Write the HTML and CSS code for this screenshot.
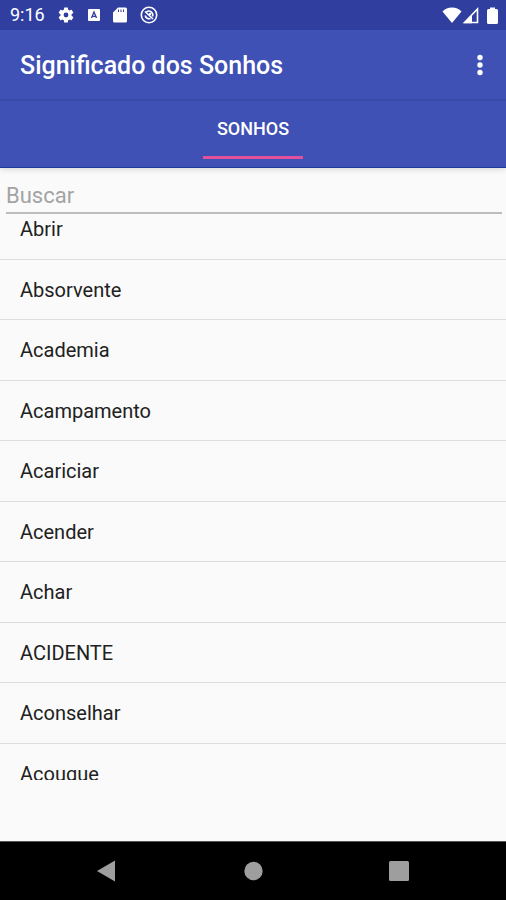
FILE: index.html
```html
<!DOCTYPE html>
<html lang="pt-BR">
<head>
<meta charset="utf-8">
<meta name="viewport" content="width=device-width, initial-scale=1">
<title>Significado dos Sonhos</title>
<link rel="stylesheet" href="styles.css">
</head>
<body>
<div class="screen">
  <header class="header">
    <div class="status">
      <time class="clock">9:16</time>
      <div class="notices">
        <svg width="18" height="18" viewBox="0 0 24 24" fill="currentColor" aria-hidden="true"><path fill-rule="evenodd" d="M19.4 13a7.500 7.500 0 0 0 0-2l2.200-1.700a.5.5 0 0 0 .1-.6l-2-3.500a.5.5 0 0 0-.6-.2l-2.500 1a7.700 7.700 0 0 0-1.700-1l-.4-2.600a.5.5 0 0 0-.5-.4h-4a.5.5 0 0 0-.5.4L9.100 5a7.700 7.700 0 0 0-1.700 1l-2.500-1a.5.5 0 0 0-.6.200l-2 3.500a.5.5 0 0 0 .1.600L4.600 11a7.500 7.500 0 0 0 0 2l-2.200 1.700a.5.5 0 0 0-.1.600l2 3.500c.1.200.4.300.6.200l2.500-1a7.700 7.700 0 0 0 1.700 1l.4 2.600c0 .200.200.4.5.4h4c.2 0 .5-.2.5-.4l.4-2.600a7.700 7.700 0 0 0 1.700-1l2.500 1c.2.100.5 0 .6-.2l2-3.500a.5.5 0 0 0-.1-.6zM12 15.200a3.200 3.200 0 1 1 0-6.400 3.200 3.200 0 0 1 0 6.400z"/></svg>
        <svg width="12" height="14" viewBox="0 0 12 14" aria-hidden="true"><rect y="1" width="12" height="12" rx="1" fill="currentColor"/><path d="M3.500 10 6 4l2.500 6M4.500 8.300h3" fill="none" stroke="#303f9f" stroke-width="1.300"/></svg>
        <svg width="14" height="16" viewBox="0 0 14 16" aria-hidden="true"><path d="M5 .5h7.500A1.500 1.500 0 0 1 14 2v12a1.500 1.500 0 0 1-1.500 1.500h-11A1.500 1.500 0 0 1 0 14V5.500z" fill="currentColor"/><path d="M5.500 2.500v2.500M8 2.500v2.500M10.500 2.500v2.500" stroke="#303f9f" stroke-width="1"/></svg>
        <svg width="18" height="18" viewBox="0 0 18 18" fill="none" stroke="currentColor" aria-hidden="true"><circle cx="9" cy="9" r="7.700" stroke-width="1.600"/><path d="M5 5.500 13 13M5.200 9.500A4 4 0 0 0 10.500 12.500M6.500 5.800A4 4 0 0 1 12.500 10.500" stroke-width="1.600"/><circle cx="10" cy="8" r="1.200" fill="currentColor" stroke="none"/></svg>
      </div>
      <div class="signals">
        <svg width="20" height="16" viewBox="0 0 20 16" fill="currentColor" aria-hidden="true"><path d="M10 16 .5 4.500C3 2 6 .5 10 .5s7 1.500 9.500 4z"/></svg>
        <svg width="17" height="17" viewBox="0 0 17 17" aria-hidden="true"><path d="M2.500 15.500 15.500 2v13.500z" fill="none" stroke="currentColor" stroke-width="1.600"/><path d="M1.500 16.300 10 7.500v8.800z" fill="currentColor"/></svg>
        <svg width="11" height="17" viewBox="0 0 11 17" fill="currentColor" aria-hidden="true"><path d="M3 2V.5h5V2h1.500A1.500 1.500 0 0 1 11 3.500v12A1.500 1.500 0 0 1 9.500 17h-8A1.500 1.500 0 0 1 0 15.500v-12A1.500 1.500 0 0 1 1.500 2z"/></svg>
      </div>
    </div>
    <div class="appbar">
      <h1 class="title">Significado dos Sonhos</h1>
      <button class="more" type="button" aria-label="Mais opções">
        <svg width="6" height="22" viewBox="0 0 6 22" fill="currentColor" aria-hidden="true"><circle cx="3" cy="3.500" r="2.700"/><circle cx="3" cy="11" r="2.700"/><circle cx="3" cy="18.500" r="2.700"/></svg>
      </button>
    </div>
    <nav class="tabs"><a class="tab" href="#sonhos" aria-current="page">SONHOS</a></nav>
  </header>
  <main class="content" id="sonhos">
    <input class="search" type="text" placeholder="Buscar" aria-label="Buscar">
    <div class="viewport">
      <ul class="list">
        <li class="row">Abrir</li>
        <li class="row">Absorvente</li>
        <li class="row">Academia</li>
        <li class="row">Acampamento</li>
        <li class="row">Acariciar</li>
        <li class="row">Acender</li>
        <li class="row">Achar</li>
        <li class="row">ACIDENTE</li>
        <li class="row">Aconselhar</li>
        <li class="row">Acougue</li>
      </ul>
    </div>
  </main>
  <footer class="navbar">
    <button class="key" type="button" aria-label="Voltar"><svg width="20" height="22" viewBox="0 0 20 22" fill="currentColor" aria-hidden="true"><path d="M0 11 18 .5v21z"/></svg></button>
    <button class="key" type="button" aria-label="Início"><svg width="20" height="20" viewBox="0 0 20 20" fill="currentColor" aria-hidden="true"><circle cx="10.500" cy="10" r="9.200"/></svg></button>
    <button class="key" type="button" aria-label="Recentes"><svg width="20" height="20" viewBox="0 0 20 20" fill="currentColor" aria-hidden="true"><rect width="20" height="20" rx="1.500"/></svg></button>
  </footer>
</div>
</body>
</html>
```
FILE: styles.css
```css
* {
  box-sizing: border-box;
}

body {
  margin: 0;
  background: #fafafa;
  color: #212121;
  font-family: Roboto, "Liberation Sans", sans-serif;
}

button {
  display: grid;
  place-items: center;
  padding: 0;
  border: 0;
  background: none;
  color: inherit;
}

svg {
  display: block;
}

.screen {
  display: flex;
  flex-direction: column;
  height: 100vh;
}

.header {
  background: #3f51b5;
  color: #fff;
  border-bottom: 1px solid #1c3a9c;
  box-shadow: 0 1px 6px rgba(0, 0, 0, 0.16);
}

.status {
  display: flex;
  align-items: center;
  height: 30px;
  padding: 0 8px 0 10px;
  background: #303f9f;
}

.clock {
  font-size: 18px;
  line-height: 32px;
}

.notices {
  display: flex;
  align-items: center;
  gap: 13px;
  margin-left: 12px;
}

.signals {
  display: flex;
  align-items: center;
  margin-left: auto;
}

.signals svg:last-child {
  margin-left: 8px;
}

.appbar {
  display: flex;
  align-items: center;
  justify-content: space-between;
  height: 71px;
  padding: 0 16px 0 20px;
  border-bottom: 2px solid #3b4ba9;
}

.title {
  margin: 0;
  font-size: 25px;
  font-weight: 500;
  line-height: 32px;
  padding-top: 2px;
}

.more {
  width: 20px;
  height: 40px;
}

.tabs {
  display: flex;
  justify-content: center;
  height: 66px;
  padding-bottom: 8px;
}

.tab {
  width: 100px;
  border-bottom: 3px solid #e0529c;
  color: #fff;
  font-size: 18px;
  font-weight: 500;
  line-height: 56px;
  text-align: center;
  text-decoration: none;
}

.content {
  display: flex;
  flex: 1;
  flex-direction: column;
  min-height: 0;
  padding: 12px 0 61px;
}

.search {
  height: 34px;
  margin: 0 4px 0 6px;
  padding: 0 0 2px;
  border: 0;
  border-bottom: 2px solid #bdbdbd;
  border-radius: 0;
  outline: 0;
  background: none;
  color: inherit;
  font: inherit;
  font-size: 22px;
}

.search::placeholder {
  color: #a3a3a3;
  opacity: 1;
}

.viewport {
  flex: 1;
  min-height: 0;
  overflow: hidden;
}

.list {
  margin: -15px 0 0;
  padding: 0;
  list-style: none;
}

.row {
  height: 60px;
  padding: 0 20px;
  border-bottom: 1px solid #dedede;
  font-size: 20px;
  line-height: 61px;
}

.row:nth-child(odd) {
  height: 61px;
}

.navbar {
  display: flex;
  flex-shrink: 0;
  align-items: center;
  justify-content: center;
  gap: 106px;
  height: 59px;
  border-top: 1px solid #555;
  background: #000;
  color: #9e9e9e;
}

.key {
  width: 40px;
  height: 40px;
}
```
